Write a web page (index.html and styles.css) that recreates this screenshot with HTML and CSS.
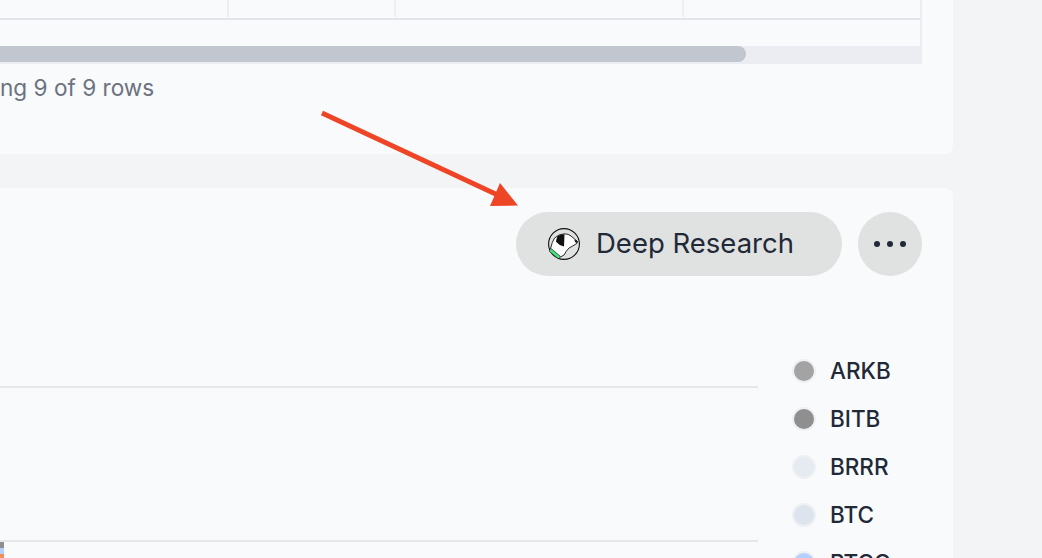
FILE: index.html
```html
<!DOCTYPE html>
<html lang="en">
<head>
  <meta charset="UTF-8">
  <title>Deep Research</title>
  <meta name="viewport" content="width=device-width, initial-scale=1.0">
  <link rel="stylesheet" href="styles.css">
</head>
<body>
  <div class="page">
    <!-- holdings table, cut off by the window -->
    <section class="card table-card">
      <div class="table-wrap">
        <div class="table-row">
          <div class="cell cell-a"></div>
          <div class="cell cell-b"></div>
          <div class="cell cell-c"></div>
          <div class="cell cell-d"></div>
        </div>
        <div class="table-blank"></div>
        <div class="scroll-track">
          <div class="scroll-thumb"></div>
        </div>
      </div>
      <p class="row-count">Showing 9 of 9 rows</p>
    </section>

    <!-- chart card -->
    <section class="card chart-card">
      <div class="actions">
        <button class="pill-button">
          <svg class="dog-logo" viewBox="0 0 32 32" width="32" height="32">
            <circle cx="16" cy="16" r="15.400" fill="none" stroke="#111" stroke-width="1.100"/>
            <path d="M2.500 20.500 Q4 14 6.500 10 Q11 5.800 16.500 5.800 Q20.500 5.800 23 8 Q26.500 11 29.400 13.300 L29 15.300 Q25 18 21 20 Q18 23 16 27 L12.500 29 Z" fill="#fff" stroke="#111" stroke-width=".9" stroke-linejoin="round"/>
            <path d="M9.500 8 Q13 6 16.500 6.200 L16 18.500 Q11 17.500 8 13.800 Q8.500 10.500 9.500 8 Z" fill="#111"/>
            <path d="M26.300 11.400 L29.500 13.200 L29 15 L27 14 Z" fill="#111"/>
            <path d="M2.800 20.300 L12.300 28.300 L10.300 30.800 L1.300 23.300 Z" fill="#4ade80" stroke="#111" stroke-width=".5"/>
          </svg>
          <span>Deep Research</span>
        </button>
        <button class="more-button" aria-label="More">
          <span class="dot"></span><span class="dot"></span><span class="dot"></span>
        </button>
      </div>

      <div class="chart-body">
        <div class="plot">
          <div class="grid-line"></div>
          <div class="grid-line grid-line-low"></div>
          <div class="stack">
            <div class="stack-grey"></div>
            <div class="stack-blue"></div>
            <div class="stack-orange"></div>
          </div>
        </div>
        <ul class="legend">
          <li><span class="swatch swatch-arkb"></span>ARKB</li>
          <li><span class="swatch swatch-bitb"></span>BITB</li>
          <li><span class="swatch swatch-brrr"></span>BRRR</li>
          <li><span class="swatch swatch-btc"></span>BTC</li>
          <li><span class="swatch swatch-btco"></span>BTCO</li>
        </ul>
      </div>
    </section>
  </div>

  <!-- annotation arrow on top of the screenshot -->
  <svg class="arrow" viewBox="0 0 1042 558" width="1042" height="558">
    <line x1="322" y1="113" x2="502" y2="197" stroke="#ef4527" stroke-width="5"/>
    <polygon points="500,183 490,206 518,205.500" fill="#ef4527"/>
  </svg>
</body>
</html>
```

FILE: styles.css
```css
html, body {
  margin: 0;
  padding: 0;
  height: 558px;
  overflow: hidden;
}
body {
  position: relative;
  background-color: #f3f4f6;
  font-family: Inter, "Liberation Sans", sans-serif;
  color: #1f2937;
}

.page {
  width: 1153px;
  margin-left: -200px;
  height: 558px;
  overflow: hidden;
  display: flex;
  flex-direction: column;
  gap: 34px;
}

.card {
  background-color: #f9fafc;
  border-radius: 0 0 8px 8px;
}

/* table card */
.table-card {
  height: 154px;
  flex: none;
  padding-right: 31px;
  padding-left: 32px;
  box-sizing: border-box;
}
.table-wrap {
  border-right: 2px solid #ebedf2;
}
.table-row {
  display: flex;
  height: 18px;
  border-bottom: 2px solid #e2e6ec;
}
.cell {
  flex: none;
  border-right: 2px solid #eceff3;
  margin-bottom: 1px;
  box-sizing: border-box;
}
.cell-a { width: 397px; }
.cell-b { width: 167px; }
.cell-c { width: 288px; }
.cell-d { width: 236px; border-right: none; }
.table-blank {
  height: 26px;
}
.scroll-track {
  height: 18px;
  background-color: #ebedf2;
}
.scroll-thumb {
  width: 914px;
  height: 16px;
  background-color: #c1c6cf;
  border-radius: 0 8px 8px 0;
}
.row-count {
  margin: 9px 0 0 103px;
  font-size: 22.6px;
  line-height: 30px;
  color: #6b7280;
}

/* chart card */
.chart-card {
  border-radius: 8px 8px 0 0;
  padding: 24px 31px 0 0;
  flex: 1;
  box-sizing: border-box;
}
.actions {
  display: flex;
  justify-content: flex-end;
  gap: 16px;
}
.pill-button {
  display: flex;
  align-items: center;
  gap: 16px;
  width: 326px;
  height: 64px;
  padding: 0 0 2px 32px;
  border: none;
  border-radius: 32px;
  background-color: #e0e2e1;
  color: #1f2937;
  font-family: inherit;
  font-size: 27.5px;
  cursor: pointer;
}
.dog-logo {
  flex: none;
  margin-top: 2px;
}
.more-button {
  display: flex;
  align-items: center;
  justify-content: center;
  gap: 7px;
  width: 64px;
  height: 64px;
  padding: 0;
  border: none;
  border-radius: 50%;
  background-color: #e0e2e1;
  cursor: pointer;
}
.dot {
  width: 6px;
  height: 6px;
  border-radius: 50%;
  background-color: #1f2937;
}

.chart-body {
  display: flex;
  margin-top: 71px;
}
.plot {
  position: relative;
  width: 958px;
  padding-top: 39px;
  flex: none;
}
.grid-line {
  height: 2px;
  background-color: #e5e7eb;
}
.grid-line-low {
  margin-top: 152px;
}
.stack {
  position: absolute;
  top: 195px;
  left: 200px;
  width: 4px;
}
.stack-grey { height: 6px; background-color: #8f8f8f; }
.stack-blue { height: 6px; background-color: #b3d0ff; }
.stack-orange { height: 10px; background-color: #ef8f5a; }

.legend {
  list-style: none;
  margin: 0 0 0 34px;
  padding: 0;
}
.legend li {
  display: flex;
  align-items: center;
  gap: 14px;
  height: 46px;
  padding-bottom: 2px;
  font-size: 22.5px;
  font-weight: 500;
}
.swatch {
  width: 20px;
  height: 20px;
  margin-top: 2px;
  border: 2px solid #eef0f4;
  border-radius: 50%;
  background-color: #e5eaf1;
  flex: none;
}
.swatch-arkb { background-color: #a3a3a3; }
.swatch-bitb { background-color: #8f8f8f; }
.swatch-brrr { background-color: #e6ebf2; }
.swatch-btc { background-color: #dde4ed; }
.swatch-btco { background-color: #b3d0ff; }

.arrow {
  position: absolute;
  top: 0;
  left: 0;
  pointer-events: none;
}
```
